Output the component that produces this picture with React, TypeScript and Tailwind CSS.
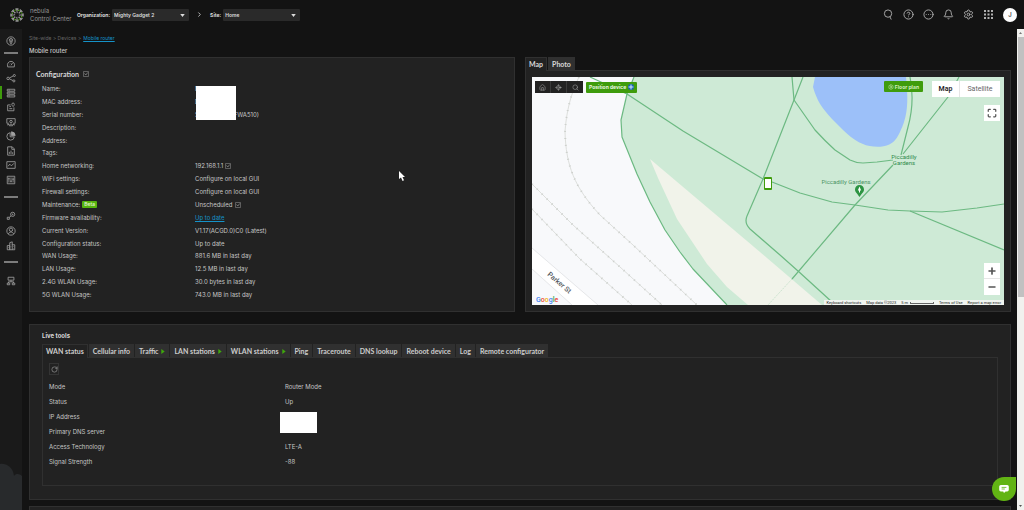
import type { ReactNode } from "react";
import { clsx } from "clsx";
import {
  Bell,
  ChevronRight,
  CircleEllipsis,
  CircleHelp,
  House,
  LocateFixed,
  Maximize,
  Minus,
  Plus,
  RotateCw,
  Search,
  Settings,
} from "lucide-react";

interface ConfigRow {
  label: string;
  value?: ReactNode;
  beta?: boolean;
  editable?: boolean;
}

const configRows: ConfigRow[] = [
  { label: "Name:", value: "N" },
  { label: "MAC address:", value: "D" },
  {
    label: "Serial number:",
    value: (
      <span className="flex w-16 justify-between">
        <span>S</span>
        <span>(FWA510)</span>
      </span>
    ),
  },
  { label: "Description:" },
  { label: "Address:" },
  { label: "Tags:" },
  { label: "Home networking:", value: "192.168.1.1", editable: true },
  { label: "WiFi settings:", value: "Configure on local GUI" },
  { label: "Firewall settings:", value: "Configure on local GUI" },
  { label: "Maintenance:", value: "Unscheduled", beta: true, editable: true },
  {
    label: "Firmware availability:",
    value: (
      <a href="#firmware" className="text-[#1592c8] underline">
        Up to date
      </a>
    ),
  },
  { label: "Current Version:", value: "V1.17(ACGD.0)C0 (Latest)" },
  { label: "Configuration status:", value: "Up to date" },
  { label: "WAN Usage:", value: "881.6 MB in last day" },
  { label: "LAN Usage:", value: "12.5 MB in last day" },
  { label: "2.4G WLAN Usage:", value: "30.0 bytes in last day" },
  { label: "5G WLAN Usage:", value: "743.0 MB in last day" },
];

const statusRows = [
  { label: "Mode", value: "Router Mode" },
  { label: "Status", value: "Up" },
  { label: "IP Address", value: "" },
  { label: "Primary DNS server", value: "" },
  { label: "Access Technology", value: "LTE-A" },
  { label: "Signal Strength", value: "-88" },
];

const liveTabs = [
  { label: "WAN status" },
  { label: "Cellular info" },
  { label: "Traffic", play: true },
  { label: "LAN stations", play: true },
  { label: "WLAN stations", play: true },
  { label: "Ping" },
  { label: "Traceroute" },
  { label: "DNS lookup" },
  { label: "Reboot device" },
  { label: "Log" },
  { label: "Remote configurator" },
];

interface NavItem {
  label: string;
  icon: ReactNode;
}

const mainNav: NavItem[] = [
  { label: "Dashboard", icon: <path d="M4 17A8.500 8.500 0 1 1 20 17V19H4ZM12 15L16 9M7 14H8M9 9.500L10 10.500" /> },
  {
    label: "Topology",
    icon: (
      <>
        <circle cx="5" cy="13" r="3" />
        <circle cx="20" cy="6" r="2.500" />
        <circle cx="19" cy="19" r="2.500" />
        <path d="M8 12L17.500 7M8 14L16.500 18" />
      </>
    ),
  },
  { label: "Devices", icon: <path d="M3 3H21V7.500H3ZM3 10H21V14.500H3ZM3 17H21V21.500H3ZM6 5.200H9M6 12.200H9M6 19.200H9" /> },
  { label: "Map", icon: <path d="M11 7H4V21H19V13M8 11H12M8 16H15M17 11C14 8 14 6 14 5.500A3 3 0 0 1 20 5.500C20 6 20 8 17 11Z" /> },
  {
    label: "Clients",
    icon: (
      <>
        <path d="M7 15H2V4H22V15H17M4 20V18H8M20 20V18H16M8 21C8 16 16 16 16 21Z" />
        <circle cx="12" cy="11" r="3" />
      </>
    ),
  },
  {
    label: "Applications",
    icon: (
      <>
        <path d="M10 4A9 9 0 1 0 20 14H10Z" />
        <path d="M13 2A9 9 0 0 1 22 11H13Z" fill="currentColor" />
      </>
    ),
  },
  { label: "Reports", icon: <path d="M4 2H15L20 7V22H4ZM14 2V8H20M8 19V14M12 19V11M16 19V15" /> },
  { label: "Monitor", icon: <path d="M2 4H22V20H2ZM5 15L9 10L13 14L19 8" /> },
  { label: "Configure", icon: <path d="M3 3H21V21H3ZM7 6V18M12 6V18M17 6V18M5 9H9M10 15H14M15 10H19" /> },
];

const orgNav: NavItem[] = [
  {
    label: "Organization",
    icon: (
      <>
        <circle cx="16" cy="8" r="5" />
        <circle cx="16" cy="8" r="1" />
        <path d="M12 12L8 15M3 15H8V20H3Z" />
      </>
    ),
  },
  {
    label: "Administrators",
    icon: (
      <>
        <circle cx="12" cy="12" r="10" />
        <circle cx="12" cy="9" r="4" />
        <path d="M6 19C7 13 17 13 18 19" />
      </>
    ),
  },
  { label: "Inventory", icon: <path d="M3 21V11H9V21M9 21V4L15 2V21M15 9H21V21H3M12 7V8M12 12V13M6 15V16M18 13V14M18 17V18" /> },
];

function Logo() {
  return (
    <svg viewBox="-8 -8 16 16" className="size-4" fill="none" strokeLinecap="round">
      {[0, 45, 90, 135, 180, 225, 270, 315].map((angle) => (
        <g key={angle} transform={`rotate(${angle})`}>
          <path d="M-1.3 -6H1.2M0 -6V-3.600" stroke="#b5b5b5" strokeWidth="1" />
          <path d="M1.2 -4.400L2.3 -4.700" stroke="#55a51c" strokeWidth="1" />
          <circle cx="0.8" cy="-2.4" r="0.6" fill="#9c9c9c" />
        </g>
      ))}
    </svg>
  );
}

function EditButton({ label }: { label: string }) {
  return (
    <button type="button" aria-label={label} className="flex">
      <svg viewBox="0 0 12 12" className="size-[6px]" fill="none" stroke="#9a9a9a">
        <path d="M1 1H11V11H1Z" />
        <path d="M3 5L5.500 8L9.500 3" strokeWidth="1.400" />
      </svg>
    </button>
  );
}

interface PickerProps {
  id: string;
  label: string;
  value: string;
}

function Picker({ id, label, value }: PickerProps) {
  return (
    <div className="flex items-center gap-0.5 text-[5px]">
      <label htmlFor={id} className="font-bold text-[#dcdcdc]">
        {label}
      </label>
      <div className="relative w-[77px]">
        <select
          id={id}
          defaultValue={value}
          className="block h-3 w-full appearance-none rounded-[1px] bg-[#2a2a2a] px-0.5 font-semibold text-[#dcdcdc]"
        >
          <option>{value}</option>
        </select>
        <svg viewBox="0 0 6 4" className="pointer-events-none absolute top-[5px] right-1 h-[3px] w-[5px]">
          <path d="M0 0H6L3 4Z" fill="#dcdcdc" />
        </svg>
      </div>
    </div>
  );
}

function Header() {
  return (
    <header className="flex h-[29px] shrink-0 items-center pr-[7px] pl-[9px]">
      <div className="flex w-[68px] items-center gap-[5px]">
        <Logo />
        <div className="text-[6px] leading-[8px] whitespace-nowrap text-[#959595]">
          nebula
          <br />
          Control Center
        </div>
      </div>
      <div className="flex items-center gap-[7px]">
        <Picker id="organization" label="Organization:" value="Mighty Gadget 2" />
        <ChevronRight className="size-[7px] text-[#c5c5c5]" strokeWidth={3} />
        <Picker id="site" label="Site:" value="Home" />
      </div>
      <div className="ml-auto flex items-center gap-[9px] text-[#b0b0b0]">
        <button type="button" aria-label="Search">
          <svg viewBox="0 0 24 24" className="size-[11px]" fill="none" stroke="currentColor" strokeWidth="2">
            <circle cx="11" cy="10" r="8" />
            <path d="M15 17L18 23" />
          </svg>
        </button>
        <button type="button" aria-label="Help">
          <CircleHelp className="size-[11px]" />
        </button>
        <button type="button" aria-label="More">
          <CircleEllipsis className="size-[11px]" />
        </button>
        <button type="button" aria-label="Notifications">
          <Bell className="size-[11px]" />
        </button>
        <button type="button" aria-label="Settings">
          <Settings className="size-[11px]" />
        </button>
        <button type="button" aria-label="Apps">
          <svg viewBox="0 0 11 11" className="size-[11px]" fill="currentColor">
            {[1, 4.5, 8].map((x) => [1, 4.5, 8].map((y) => <rect key={`${x}-${y}`} x={x} y={y} width="2" height="2" />))}
          </svg>
        </button>
        <button
          type="button"
          className="flex size-[14px] items-center justify-center rounded-full bg-white text-[6px] font-semibold text-[#555]"
        >
          J
        </button>
      </div>
    </header>
  );
}

function NavButton({ label, icon, active = false }: NavItem & { active?: boolean }) {
  return (
    <button
      type="button"
      aria-label={label}
      className={clsx(
        "flex h-[13px] w-full items-center justify-center border-x-2",
        active ? "border-l-[#3f9c0c] border-r-transparent" : "border-transparent"
      )}
    >
      <svg viewBox="0 0 24 24" className="size-[10px]" fill="none" stroke="currentColor" strokeWidth="2">
        {icon}
      </svg>
    </button>
  );
}

function Sidebar() {
  return (
    <nav className="relative flex w-[22px] shrink-0 flex-col items-center bg-[#1a1a1a] pt-[5px] text-[#a0a0a0]">
      <NavButton
        label="Site-wide"
        icon={
          <>
            <circle cx="12" cy="12" r="10" />
            <circle cx="12" cy="10" r="4" />
            <circle cx="12" cy="10" r="1" />
            <path d="M9 14L12 19L15 14" />
          </>
        }
      />
      <hr className="mt-[5px] mb-[3px] w-[14px] border-t-2 border-[#7c7c7c]" />
      <div className="flex h-[129px] w-full flex-col justify-between">
        {mainNav.map((item) => (
          <NavButton key={item.label} {...item} active={item.label === "Devices"} />
        ))}
      </div>
      <hr className="mt-[10px] mb-[11px] w-[14px] border-t-2 border-[#7c7c7c]" />
      <div className="flex w-full flex-col gap-0.5">
        {orgNav.map((item) => (
          <NavButton key={item.label} {...item} />
        ))}
      </div>
      <hr className="mt-[9px] mb-[11px] w-[14px] border-t-2 border-[#7c7c7c]" />
      <NavButton label="Groups" icon={<path d="M5 3H19V10H5ZM12 10V14M6 17V14H18V17M3 17H9V21H3ZM15 17H21V21H15Z" />} />
      <svg viewBox="0 0 22 47" className="absolute bottom-0 left-0 w-[22px]">
        <path d="M0 1C6 0 13 4 14 13C16 10 20 11 22 13V47H0Z" fill="#282a2c" />
      </svg>
    </nav>
  );
}

function Configuration() {
  return (
    <section className="relative flex flex-col border border-[#303030] bg-[#222] pt-3 pr-2 pb-[10px] pl-[6px]">
      <h2 className="flex h-2 items-center gap-1 font-[Lato,sans-serif] text-[7px] font-bold text-[#d8d8d8]">
        Configuration
        <EditButton label="Edit configuration" />
      </h2>
      <dl className="mt-[5px] flex flex-1 flex-col justify-between pl-[6px] text-[#c6c6c6]">
        {configRows.map((row) => (
          <div key={row.label} className="flex h-3 items-center">
            <dt className="flex w-[153px] items-center gap-0.5">
              {row.label}
              {row.beta && (
                <span className="rounded-[1px] bg-[#55b30f] px-0.5 text-[5px] leading-[7px] font-medium text-[#e6f5d8]">Beta</span>
              )}
            </dt>
            <dd className="flex items-center gap-0.5">
              {row.value}
              {row.editable && <EditButton label={`Edit ${row.label}`} />}
            </dd>
          </div>
        ))}
      </dl>
      <div className="absolute top-[28px] left-[166px] h-[34px] w-10 bg-white" />
    </section>
  );
}

function MapDrawing() {
  return (
    <svg viewBox="0 0 472 228" preserveAspectRatio="xMidYMid slice" className="block h-[228px] w-full bg-[#f8f9fb]" fill="none">
      <path d="M102 0L95 17L89 43L90 60L105 97L118 125L133 153L148 175L161 192L195 228H472V0Z" fill="#ceead6" />
      <path d="M118 82L228 175L290 228H216L195 210L175 187L145 142L126 101Z" fill="#f1f3ea" />
      <path
        d="M283 0L281 10C285 24 290 31 300 42C310 52 320 63 331 67C337 70 350 71 356 68C361 66 364 63 367 57C370 51 371 48 372 45C376 33 376 20 374 0Z"
        fill="#9cc0f9"
      />
      <path d="M0 171L66 228H40L0 192Z" fill="#fff" />
      <path d="M0 171L66 228M0 192L40 228" stroke="#dfe1e3" strokeWidth="0.8" />
      <g stroke="#d9dbd8" strokeWidth="0.9">
        <path d="M47 0C38 18 34 38 33 55C34 88 42 110 68 138L101 168L165 228" />
        <path d="M0 107L41 148L88 190L130 228" />
        <path d="M0 132L48 182L100 228" />
      </g>
      <g stroke="#cdd0cc" strokeWidth="2" strokeDasharray="1 6">
        <path d="M47 0C38 18 34 38 33 55C34 88 42 110 68 138L101 168L165 228" />
        <path d="M0 107L41 148L88 190L130 228" />
        <path d="M0 132L48 182L100 228" />
      </g>
      <g stroke="#6cb982" strokeWidth="1.2" strokeLinejoin="round">
        <path d="M102 0L95 17L89 43L90 60L105 97L118 125L133 153L148 175L161 192L195 228" />
        <path d="M58 0L95 17L151 54L231 102L240 105L268 116L300 125L323 128L356 133L378 134L410 135L445 131L472 127" />
        <path d="M378 134L472 173" />
        <path d="M271 0L262 23L231 102L215 139Q212 146 218 152L248 178L266 194L300 225" />
        <path d="M260 0L262 23L283 53Q293 64 303 73L318 83Q324 86 331 86L345 85L361 83" />
        <path d="M378 0Q383 25 376 50L369 78" />
        <path d="M427 0L416 20L371 77" />
        <path d="M361 88L323 128L260 202" />
      </g>
      <path d="M260 202L236 228" stroke="#b4d9bd" strokeWidth="0.6" strokeDasharray="2 1" />
      <g fontFamily="Roboto, sans-serif" fontSize="6" fill="#2f8a4a" stroke="#ceead6" strokeWidth="1" paintOrder="stroke" textAnchor="middle">
        <text x="372" y="82">Piccadilly</text>
        <text x="372" y="88">Gardens</text>
        <text x="314" y="107" fill="#4a9464">
          Piccadilly Gardens
        </text>
      </g>
      <text transform="translate(15 198) rotate(41)" fontFamily="Roboto, sans-serif" fontSize="7" fontWeight="500" fill="#54595e">
        Parker St
      </text>
      <path d="M327.500 120C325 116 323 115 323 112.500A4.300 4.300 0 0 1 332 112.500C332 115 330 116 327.500 120Z" fill="#2c9442" />
      <path d="M327.500 109.500L325.800 113.500H329.200ZM327 113.500H328V115.500H327Z" fill="#fff" />
      <rect x="232" y="100" width="8" height="13" rx="1" fill="#3f9c0c" />
      <rect x="233" y="102" width="6" height="9" fill="#fff" />
    </svg>
  );
}

function MapPanel() {
  return (
    <section className="flex flex-col">
      <div className="flex h-[13px] gap-px font-[Lato,sans-serif] text-[7px] font-bold text-[#d8d8d8]">
        <button type="button" className="z-10 -mb-px border-x border-t border-[#303030] bg-[#222] px-[3px] pb-px">
          Map
        </button>
        <button type="button" className="border-x border-t border-[#303030] bg-[#303030] px-[3px]">
          Photo
        </button>
      </div>
      <div className="border border-[#303030] bg-[#222] px-[6px] py-[6px]">
        <div className="relative overflow-hidden font-[Roboto,sans-serif]">
          <MapDrawing />
          <div className="absolute top-[4px] left-[3px] flex h-3 items-center gap-[3px]">
            <div className="flex h-full divide-x divide-[#3a3a3a] bg-[#222] text-[#9b9b9b]">
              <button type="button" aria-label="Home position" className="flex w-4 items-center justify-center">
                <House className="size-[7px]" />
              </button>
              <button type="button" aria-label="Locate" className="flex w-4 items-center justify-center">
                <LocateFixed className="size-[7px]" />
              </button>
              <button type="button" aria-label="Search map" className="flex w-4 items-center justify-center">
                <Search className="size-[7px]" />
              </button>
            </div>
            <button
              type="button"
              className="flex h-[11px] items-center gap-0.5 rounded-[1px] bg-[#3f9c0c] px-[3px] font-[Inter,sans-serif] text-[5px] font-bold whitespace-nowrap text-[#e9f5e0]"
            >
              Position device
              <svg viewBox="0 0 10 10" className="size-[6px]">
                <circle cx="5" cy="5" r="5" fill="#1b63b5" />
                <path d="M5 1V9M1 5H9" stroke="#d9ecff" strokeWidth="1.600" />
              </svg>
            </button>
          </div>
          <button
            type="button"
            className="absolute top-[4px] right-[81px] flex h-[11px] items-center gap-px rounded-[1px] bg-[#3f9c0c] px-1 font-[Inter,sans-serif] text-[5px] font-bold whitespace-nowrap text-[#d3edc0]"
          >
            <Settings className="size-[6px]" />
            Floor plan
          </button>
          <div className="absolute top-[4px] right-1 flex h-4 divide-x divide-[#e6e6e6] bg-white text-[7px]">
            <button type="button" className="w-7 font-semibold text-[#222]">
              Map
            </button>
            <button type="button" className="w-10 text-[#666]">
              Satellite
            </button>
          </div>
          <button
            type="button"
            aria-label="Toggle fullscreen"
            className="absolute top-[28px] right-1 flex size-4 items-center justify-center bg-white text-[#555]"
          >
            <Maximize className="size-[10px]" strokeWidth={3} />
          </button>
          <div className="absolute right-1 bottom-[10px] flex w-4 flex-col divide-y divide-[#e6e6e6] bg-white text-[#555]">
            <button type="button" aria-label="Zoom in" className="flex h-4 items-center justify-center">
              <Plus className="size-[10px]" strokeWidth={4} />
            </button>
            <button type="button" aria-label="Zoom out" className="flex h-4 items-center justify-center">
              <Minus className="size-[10px]" strokeWidth={4} />
            </button>
          </div>
          <div className="absolute bottom-0 left-1 text-[7px] leading-[10px] font-medium">
            <span className="text-[#4285f4]">G</span>
            <span className="text-[#ea4335]">o</span>
            <span className="text-[#f2b305]">o</span>
            <span className="text-[#4285f4]">g</span>
            <span className="text-[#34a853]">l</span>
            <span className="text-[#ea4335]">e</span>
          </div>
          <div className="absolute right-0 bottom-0 flex items-center gap-[5px] bg-[#f1f5f0] px-[3px] text-[4px] leading-[5px] whitespace-nowrap text-[#222]">
            <button type="button">Keyboard shortcuts</button>
            <span>Map data ©2023</span>
            <span className="flex items-end gap-0.5">
              5 m
              <span className="mb-px h-[2px] w-6 border-x border-b border-[#666]" />
            </span>
            <a href="#terms">Terms of Use</a>
            <a href="#report">Report a map error</a>
          </div>
        </div>
      </div>
    </section>
  );
}

function LiveTools() {
  return (
    <section className="relative mt-3 border border-[#303030] bg-[#222] px-3 pt-[7px] pb-[13px]">
      <h2 className="text-[6px] leading-[8px] font-bold text-[#d8d8d8]">Live tools</h2>
      <div className="mt-1 flex h-[13px] gap-px font-[Lato,sans-serif] text-[7px] font-bold text-[#cccccc]">
        {liveTabs.map((tab, index) => (
          <button
            key={tab.label}
            type="button"
            className={clsx(
              "flex items-center gap-[3px] border-x border-t border-[#303030] px-[3px] whitespace-nowrap",
              index === 0 ? "z-10 -mb-px bg-[#222] pb-px" : "bg-[#303030]"
            )}
          >
            {tab.label}
            {tab.play && (
              <svg viewBox="0 0 4 6" className="h-[5px] w-[4px]">
                <path d="M0 0L4 3L0 6Z" fill="#3fa80c" />
              </svg>
            )}
          </button>
        ))}
      </div>
      <div className="h-[129px] border border-[#303030] px-[6px] pt-[5px]">
        <button
          type="button"
          aria-label="Refresh"
          className="flex h-3 w-[10px] items-center justify-center border border-[#343434] text-[#aaa]"
        >
          <RotateCw className="size-[7px]" />
        </button>
        <dl className="mt-1 text-[#c6c6c6]">
          {statusRows.map((row) => (
            <div key={row.label} className="flex h-[15px] items-center">
              <dt className="w-[236px]">{row.label}</dt>
              <dd>{row.value}</dd>
            </div>
          ))}
        </dl>
      </div>
      <div className="absolute top-[87px] left-[250px] h-[21px] w-[37px] bg-white" />
    </section>
  );
}

function Scrollbar() {
  return (
    <div className="flex w-[7px] shrink-0 flex-col items-center justify-between bg-[#f1f1ee]">
      <div className="w-full">
        <svg viewBox="0 0 7 8" className="h-2 w-[7px]">
          <path d="M2 5L3.500 3L5 5Z" fill="#777" />
        </svg>
        <div className="mx-auto h-[260px] w-[6px] bg-[#c1c1c1]" />
      </div>
      <svg viewBox="0 0 7 8" className="h-2 w-[7px]">
        <path d="M2 3L3.500 5L5 3Z" fill="#555" />
      </svg>
    </div>
  );
}

export default function App() {
  return (
    <div className="flex h-screen flex-col overflow-hidden bg-[#131313] font-[Inter,sans-serif] text-[6px] leading-[8px]">
      <Header />
      <div className="flex min-h-0 flex-1">
        <Sidebar />
        <main className="min-w-0 flex-1 overflow-hidden pr-[6px] pl-[7px]">
          <div className="flex h-[18px] items-center gap-0.5 text-[5px] text-[#666]">
            <span>Site-wide &gt; Devices &gt;</span>
            <a href="#mobile-router" className="text-[#1592c8] underline">
              Mobile router
            </a>
          </div>
          <h1 className="h-[10px] text-[6px] leading-[7px] font-medium text-[#c9c9c9]">Mobile router</h1>
          <div className="grid grid-cols-2 gap-[10px]">
            <Configuration />
            <MapPanel />
          </div>
          <LiveTools />
          <section className="mt-[6px] h-40 border border-[#303030] bg-[#222]" />
        </main>
        <Scrollbar />
      </div>
      <button
        type="button"
        aria-label="Open chat"
        className="fixed right-2 bottom-[9px] flex size-6 items-center justify-center rounded-full rounded-tr-[2px] bg-[#62b414]"
      >
        <svg viewBox="0 0 12 10" className="h-2 w-[10px]">
          <path d="M2 0H10Q12 0 12 2V6Q12 8 10 8H8L6 10L5 8H2Q0 8 0 6V2Q0 0 2 0Z" fill="#fff" />
          <path d="M3 3H9M3 5H7" stroke="#62b414" />
        </svg>
      </button>
      <svg viewBox="0 0 6 10" className="pointer-events-none fixed top-[171px] left-[399px] h-[10px] w-[6px]">
        <path d="M0 0V8L2 6.500L3.500 10L5 9.300L3.500 6H6Z" fill="#fff" />
      </svg>
    </div>
  );
}
